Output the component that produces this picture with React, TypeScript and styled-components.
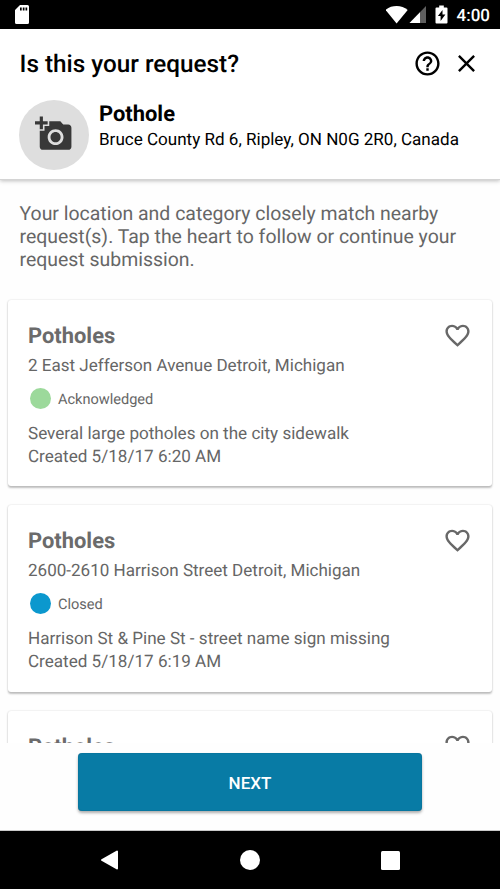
import React from 'react';
import styled, { createGlobalStyle } from 'styled-components';
import { MdAddAPhoto, MdClose, MdFavoriteBorder, MdHelpOutline } from 'react-icons/md';

const GlobalStyle = createGlobalStyle`
  * { box-sizing: border-box; }
  body { margin: 0; background: #fff; font-family: Roboto, sans-serif; text-rendering: geometricPrecision; }
  h1, h2, h3, p { margin: 0; }
  button { margin: 0; padding: 0; border: 0; background: none; color: inherit; font-family: inherit; }
`;

const Screen = styled.div`
  display: flex;
  flex-direction: column;
  width: 500px;
  height: 889px;
  overflow: hidden;
  background: #fefefe;
`;

const StatusBar = styled.div`
  display: flex;
  flex: none;
  align-items: center;
  justify-content: space-between;
  height: 29px;
  padding: 0 10px 0 15px;
  background: #000;
  color: #fff;
`;

const StatusIcons = styled.div`
  display: flex;
  align-items: center;
`;

const Clock = styled.span`
  margin-left: 7px;
  padding-top: 2px;
  font-size: 17px;
  font-weight: 500;
  line-height: 20px;
`;

const Header = styled.header`
  z-index: 1;
  flex: none;
  height: 151px;
  padding: 19px 19.5px 0 19.5px;
  border-bottom: 1px solid #d4d4d4;
  background: #fff;
  box-shadow: 0 1px 4px rgba(0, 0, 0, 0.26);
`;

const TitleRow = styled.div`
  display: flex;
  align-items: center;
  height: 30px;
  color: #000;
`;

const Title = styled.h1`
  flex: 1;
  padding-top: 1px;
  font-size: 24.3px;
  font-weight: 500;
  line-height: 30px;
`;

const IconButton = styled.button`
  display: flex;
  margin-left: 10px;
`;

const Summary = styled.div`
  display: flex;
  margin-top: 21.5px;
`;

const Avatar = styled.div`
  display: flex;
  align-items: center;
  justify-content: center;
  width: 70px;
  height: 70px;
  margin-left: -0.5px;
  border-radius: 50%;
  background: #dedede;
  color: #383838;
`;

const CameraIcon = styled(MdAddAPhoto)`
  margin: -2px 0 0 -1px;
`;

const SummaryText = styled.div`
  padding-left: 10px;
  color: #000;
`;

const Category = styled.h2`
  padding-top: 2px;
  font-size: 21.9px;
  font-weight: 700;
  line-height: 26px;
`;

const Location = styled.p`
  padding-top: 1px;
  font-size: 17.06px;
  line-height: 22px;
`;

const Content = styled.main`
  flex: none;
  height: 563px;
  overflow: hidden;
  padding: 21.5px 8px 0;
  color: #666;
`;

const Intro = styled.p`
  height: 98.5px;
  padding: 0 11.5px;
  font-size: 19.45px;
  line-height: 23px;
  white-space: pre-line;
`;

const CardList = styled.div`
  display: flex;
  flex-direction: column;
  gap: 19px;
`;

const Card = styled.article`
  flex: none;
  height: 186.3px;
  padding: 21px 20px 0;
  border-radius: 3px;
  background: #fff;
  box-shadow: 0 1.5px 2px rgba(0, 0, 0, 0.24), 0 0 2px rgba(0, 0, 0, 0.12);
`;

const CardHeader = styled.div`
  display: flex;
  justify-content: space-between;
  height: 30px;
`;

const CardTitle = styled.h3`
  padding-top: 2px;
  color: #6b6b6b;
  font-size: 21.9px;
  font-weight: 700;
  line-height: 28px;
`;

const FollowButton = styled.button`
  display: flex;
  height: 29px;
  color: #686868;
`;

const Address = styled.p`
  padding-top: 4px;
  font-size: 17.06px;
  line-height: 23px;
`;

const Status = styled.div`
  display: flex;
  align-items: center;
  height: 22px;
  margin-top: 9.5px;
  padding-left: 2px;
  font-size: 14.55px;
`;

const StatusDot = styled.span<{ $color: string }>`
  width: 21px;
  height: 21px;
  margin-right: 7px;
  border-radius: 50%;
  background: ${({ $color }) => $color};
`;

const StatusLabel = styled.span`
  padding-top: 1px;
`;

const Details = styled.p`
  margin-top: 13.5px;
  font-size: 17.08px;
  line-height: 23px;
  white-space: pre-line;
`;

const Footer = styled.footer`
  display: flex;
  flex: none;
  justify-content: center;
  height: 88px;
  padding-top: 10px;
  border-bottom: 1px solid #c9c9c9;
  background: #fefefe;
`;

const NextButton = styled.button`
  width: 344px;
  height: 58px;
  padding-top: 2px;
  border-radius: 4px;
  background: #087ba5;
  box-shadow: 0 2px 3px rgba(0, 0, 0, 0.32), inset 0 0 1px rgba(0, 60, 90, 0.7);
  color: #fff;
  font-size: 17px;
  font-weight: 500;
`;

const NavBar = styled.nav`
  display: flex;
  flex: none;
  align-items: center;
  justify-content: space-between;
  height: 58px;
  padding: 0 100px;
  background: #000;
`;

const requests = [
  {
    address: '2 East Jefferson Avenue Detroit, Michigan',
    status: 'Acknowledged',
    color: '#9cd99b',
    details: 'Several large potholes on the city sidewalk\nCreated 5/18/17 6:20 AM',
  },
  {
    address: '2600-2610 Harrison Street Detroit, Michigan',
    status: 'Closed',
    color: '#0b98ce',
    details: 'Harrison St & Pine St - street name sign missing\nCreated 5/18/17 6:19 AM',
  },
  { address: '', status: '', color: 'transparent', details: '' },
];

export default function App() {
  return (
    <>
      <GlobalStyle />
      <Screen>
        <StatusBar>
          <svg width="14" height="19" viewBox="0 0 14 19">
            <path
              fill="#fff"
              fillRule="evenodd"
              d="M5 0h7.5A1.5 1.5 0 0 1 14 1.5v16a1.5 1.5 0 0 1-1.5 1.5h-11A1.5 1.5 0 0 1 0 17.500V5zM5 2.500v3h1.700v-3zM7.800 2.500v3h1.700v-3zM10.500 2.500v3h1.700v-3z"
            />
          </svg>
          <StatusIcons>
            <svg width="64" height="19" viewBox="0.5 0 64 19" fill="#fff">
              <path d="M0 5C6-.2 16.200-.2 22.200 5L11.100 18.500z" />
              <path d="M40.500 1v17H24z" opacity=".3" />
              <path d="M40.500 1v17H34.500V7.200z" opacity=".1" />
              <path d="M34.500 7.200V18H24z" />
              <path
                fillRule="evenodd"
                d="M53.700.5h4.600v2H61a1 1 0 0 1 1 1V17.500a1 1 0 0 1-1 1H51a1 1 0 0 1-1-1V3.500a1 1 0 0 1 1-1h2.700zM57 5l-4.600 6h2.700v5l4.800-6.500H57z"
              />
            </svg>
            <Clock>4:00</Clock>
          </StatusIcons>
        </StatusBar>

        <Header>
          <TitleRow>
            <Title>Is this your request?</Title>
            <IconButton aria-label="Help">
              <MdHelpOutline size={29} />
            </IconButton>
            <IconButton aria-label="Close">
              <MdClose size={29} />
            </IconButton>
          </TitleRow>
          <Summary>
            <Avatar>
              <CameraIcon size={38} />
            </Avatar>
            <SummaryText>
              <Category>Pothole</Category>
              <Location>Bruce County Rd 6, Ripley, ON N0G 2R0, Canada</Location>
            </SummaryText>
          </Summary>
        </Header>

        <Content>
          <Intro>
            {'Your location and category closely match nearby\nrequest(s). Tap the heart to follow or continue your\nrequest submission.'}
          </Intro>
          <CardList>
            {requests.map((request, index) => (
              <Card key={index}>
                <CardHeader>
                  <CardTitle>Potholes</CardTitle>
                  <FollowButton aria-label="Follow">
                    <MdFavoriteBorder size={29} />
                  </FollowButton>
                </CardHeader>
                <Address>{request.address}</Address>
                <Status>
                  <StatusDot $color={request.color} />
                  <StatusLabel>{request.status}</StatusLabel>
                </Status>
                <Details>{request.details}</Details>
              </Card>
            ))}
          </CardList>
        </Content>

        <Footer>
          <NextButton>NEXT</NextButton>
        </Footer>

        <NavBar>
          <svg width="19" height="20" viewBox="0 0 19 20">
            <path d="M17 1.500v17L2 10z" fill="#fff" stroke="#fff" strokeWidth="2" strokeLinejoin="round" />
          </svg>
          <svg width="20" height="20" viewBox="0 0 20 20">
            <circle cx="10" cy="10" r="10" fill="#fff" />
          </svg>
          <svg width="19" height="19" viewBox="0 0 19 19">
            <rect width="19" height="19" rx="1.500" fill="#fff" />
          </svg>
        </NavBar>
      </Screen>
    </>
  );
}
